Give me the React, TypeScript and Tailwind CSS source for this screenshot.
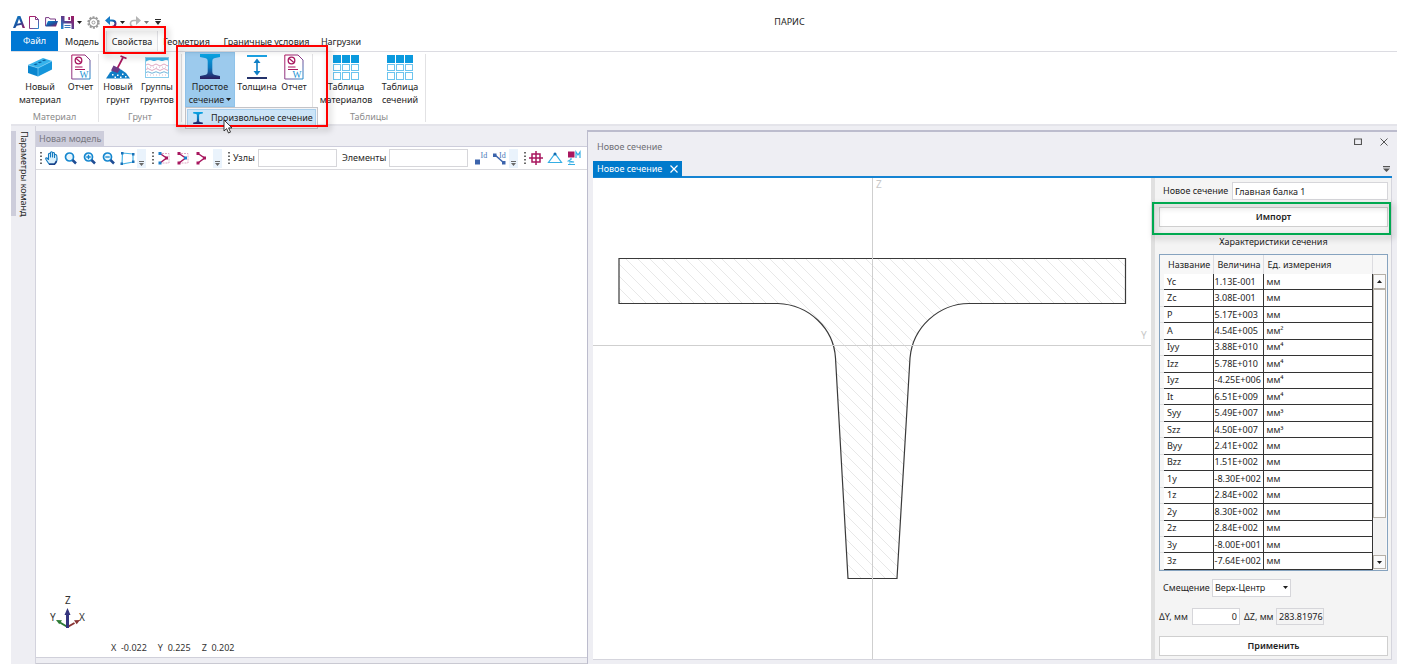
import React from "react";

const sectionRows: [string, string, string, string][] = [
  ["Yc", "1.13E-001", "мм", ""],
  ["Zc", "3.08E-001", "мм", ""],
  ["P", "5.17E+003", "мм", ""],
  ["A", "4.54E+005", "мм", "²"],
  ["Iyy", "3.88E+010", "мм", "⁴"],
  ["Izz", "5.78E+010", "мм", "⁴"],
  ["Iyz", "-4.25E+006", "мм", "⁴"],
  ["It", "6.51E+009", "мм", "⁴"],
  ["Syy", "5.49E+007", "мм", "³"],
  ["Szz", "4.50E+007", "мм", "³"],
  ["Вyy", "2.41E+002", "мм", ""],
  ["Bzz", "1.51E+002", "мм", ""],
  ["1y", "-8.30E+002", "мм", ""],
  ["1z", "2.84E+002", "мм", ""],
  ["2y", "8.30E+002", "мм", ""],
  ["2z", "2.84E+002", "мм", ""],
  ["3y", "-8.00E+001", "мм", ""],
  ["3z", "-7.64E+002", "мм", ""],
];

function Gradients() {
  return (
    <svg width="0" height="0" className="absolute" aria-hidden="true">
      <defs>
        <linearGradient id="beam" x1="0" y1="0" x2="0" y2="1">
          <stop offset="0" stopColor="#0aa5e4" />
          <stop offset="0.55" stopColor="#0b78bd" />
          <stop offset="1" stopColor="#2b1a5c" />
        </linearGradient>
        <linearGradient id="doc" x1="0" y1="0" x2="1" y2="1">
          <stop offset="0" stopColor="#b01561" />
          <stop offset="0.5" stopColor="#8a3b86" />
          <stop offset="1" stopColor="#1f8fd0" />
        </linearGradient>
        <linearGradient id="mix" x1="0" y1="0" x2="1" y2="1">
          <stop offset="0" stopColor="#0d8fd6" />
          <stop offset="0.55" stopColor="#1c4f9c" />
          <stop offset="1" stopColor="#a3165f" />
        </linearGradient>
        <linearGradient id="mixback" x1="1" y1="0" x2="0" y2="1">
          <stop offset="0" stopColor="#a3165f" />
          <stop offset="0.5" stopColor="#5b3d8c" />
          <stop offset="1" stopColor="#1593d8" />
        </linearGradient>
      </defs>
    </svg>
  );
}

function BeamIcon({ className }: { className: string }) {
  return (
    <svg viewBox="0 0 20 25" className={`shrink-0 ${className}`} aria-hidden="true">
      <path fill="url(#beam)" d="M0 0H20V3L14 4.200Q12.300 4.800 12.300 7V18Q12.300 20.200 14 20.800L20 22V25H0V22L6 20.800Q7.700 20.200 7.700 18V7Q7.700 4.800 6 4.200L0 3Z" />
    </svg>
  );
}

function BrickIcon() {
  return (
    <svg viewBox="0 0 26 20" className="h-5 w-[26px]" aria-hidden="true">
      <path fill="#35b3ec" d="M1 8 16 1 25 4 11 11Z" />
      <path fill="#0a86cf" d="M1 8 11 11V19.500L1 16Z" />
      <path fill="#1496dc" d="M11 11 25 4V12.500L11 19.500Z" />
      <path fill="#0b5f9e" d="m6.500 7.600 2.500-1.200 2 .7-2.500 1.200Zm4.200-2 2.500-1.200 2 .7-2.500 1.200Zm4.200-2 2.500-1.200 2 .7-2.500 1.200Z" />
      <path stroke="#7fd0f4" strokeWidth="0.7" fill="none" d="M1 8 11 11 25 4M11 11V19" />
    </svg>
  );
}

function ReportIcon() {
  return (
    <svg viewBox="0 0 20 26" className="h-[26px] w-5" fill="none" aria-hidden="true">
      <path stroke="url(#doc)" strokeWidth="1" d="M.8 1H14L19 6V25H.8Z" />
      <circle cx="7.500" cy="6.500" r="3.300" stroke="#a8175f" strokeWidth="1.300" />
      <path stroke="#a8175f" strokeWidth="1.200" d="m5.200 4.500 4.600 4M4 13h7.500M4 15.500H14" />
      <text x="8.500" y="24" fontSize="9.500" fill="#1c94d4" fontFamily="Liberation Serif, serif">W</text>
    </svg>
  );
}

function SoilIcon() {
  return (
    <svg viewBox="0 0 26 26" className="h-[26px] w-[26px]" fill="none" aria-hidden="true">
      <path fill="#0f7dc6" d="M1 24.500 5 18.500 10 15 16 15.500 21 19 25 24.500Z" />
      <path stroke="#a8175f" strokeWidth="1.700" d="M12 15 18 3.500" />
      <path stroke="#a8175f" strokeWidth="1.800" d="m15.500 2 6 2.500" />
      <path fill="#6a3b86" d="m8.500 11.500 7 3.500-3 4-6.500-2.500Z" />
      <path fill="#fff" d="M7 20h1.500v1.500H7ZM12 20.500h1.500V22H12ZM17 19.500h1.500V21H17ZM9.500 22.500H11V24H9.500ZM15 22.500h1.500V24H15ZM20 22h1.500v1.500H20Z" />
    </svg>
  );
}

function SoilGroupsIcon() {
  return (
    <svg viewBox="0 0 24 21" className="h-[21px] w-6" fill="none" aria-hidden="true">
      <rect x=".5" y=".5" width="23" height="20" stroke="#8accec" />
      <path fill="#42b4e6" d="M1 1H23V3.500Q21 2.500 19 3.500T15 3.500 11 3.500 7 3.500 3 3.500L1 4.500Z" />
      <path stroke="#d78fb0" strokeWidth=".8" d="M1 8q2-2 4 0t4 0 4 0 4 0 4 0 2 0M1 12.500q2-2 4 0t4 0 4 0 4 0 4 0 2 0" />
      <path stroke="#4c9fd0" strokeWidth=".8" d="M1 15.500q2-1.500 4 0t4 0 4 0 4 0 4 0 2 0" />
      <path stroke="#c9a6c9" strokeWidth=".8" strokeDasharray="1 2" d="M2 10.200H22M2 18H22" />
    </svg>
  );
}

function ThicknessIcon() {
  return (
    <svg viewBox="0 0 20 24" className="h-6 w-5" fill="none" aria-hidden="true">
      <path stroke="#1ba1e2" strokeWidth="2" d="M0 1H20" />
      <path stroke="#24336b" strokeWidth="2" d="M0 23H20" />
      <path stroke="#0e7fc6" strokeWidth="1.600" d="M10 5V19" />
      <path fill="#0e7fc6" d="m10 3.500 3.500 4.500h-7ZM10 20.500 13.500 16h-7Z" />
    </svg>
  );
}

function TableIcon() {
  return (
    <svg viewBox="0 0 26 25" className="h-[25px] w-[26px]" fill="#fff" stroke="#6cc4ee" aria-hidden="true">
      {[0, 9, 18].map((x) => (
        <g key={x}>
          <rect x={x + 0.5} y="0.500" width="7" height="7" fill="#0b9ade" stroke="#0b9ade" />
          <rect x={x + 0.5} y="9.500" width="7" height="6" />
          <rect x={x + 0.5} y="17.500" width="7" height="7" />
        </g>
      ))}
    </svg>
  );
}

function Caret({ className = "" }: { className?: string }) {
  return (
    <svg viewBox="0 0 5 3" className={`h-[3px] w-[5px] ${className}`} aria-hidden="true">
      <path fill="#1e1e1e" d="M0 0H5L2.500 3Z" />
    </svg>
  );
}

function QuickAccess() {
  return (
    <div className="flex h-[18px] w-[171px] items-center pl-[2px]">
      <svg viewBox="0 0 13 13" className="h-3 w-3" aria-hidden="true">
        <path fill="url(#mix)" fillRule="evenodd" d="M5 0H8L13 13H10.400L9.200 9.500 4 10.500 2.500 13H0ZM6.500 3 4.700 8.300 8.500 7.500Z" />
      </svg>
      <button aria-label="Новый" className="ml-[4px]">
        <svg viewBox="0 0 10 13" className="h-[13px] w-[10px]" fill="none" stroke="url(#doc)" aria-hidden="true"><path d="M.5.500H6.500L9.500 3.500V12.500H.5ZM6.500.500V3.500H9.500" /></svg>
      </button>
      <button aria-label="Открыть" className="ml-[6px]">
        <svg viewBox="0 0 13 10" className="h-[10px] w-[13px]" fill="none" aria-hidden="true"><path stroke="#7a3a86" d="M.6 9V.6H4L5 2H10.500V4" /><path fill="url(#mix)" d="M3 4H13L11 9.500H.5Z" /></svg>
      </button>
      <button aria-label="Сохранить" className="ml-[3px]">
        <svg viewBox="0 0 13 13" className="h-[13px] w-[13px]" aria-hidden="true"><path fill="url(#mixback)" d="M0 0H13V13H0Z" /><path fill="#fff" d="M3.500 0H10V5H3.500ZM2.500 7.500H10.500V13H2.500Z" /><path fill="#95266e" d="M7.300 1H9V4H7.300Z" /><path fill="#3a78b9" d="M3.500 9H9.500V10H3.500ZM3.500 11H9.500V12H3.500Z" /></svg>
      </button>
      <Caret className="ml-[3px]" />
      <button aria-label="Настройки" className="ml-[5px]">
        <svg viewBox="0 0 13 13" className="h-[13px] w-[13px]" fill="none" stroke="#9a9a9a" aria-hidden="true"><circle cx="6.500" cy="6.500" r="5.300" strokeWidth="1.800" strokeDasharray="2.100 1.230" /><circle cx="6.500" cy="6.500" r="4.300" strokeWidth="1.200" /><circle cx="6.500" cy="6.500" r="1.500" /></svg>
      </button>
      <button aria-label="Отменить" className="ml-[5px]">
        <svg viewBox="0 0 12 12" className="h-3 w-3" fill="none" aria-hidden="true"><path fill="#1778c4" d="M0 4.500 5 0V9Z" /><path stroke="url(#mix)" strokeWidth="2" d="M3 4.500H7Q10.500 4.500 10.500 7.500T7 11H5" /></svg>
      </button>
      <Caret className="ml-[3px]" />
      <button aria-label="Повторить" className="ml-[4px]">
        <svg viewBox="0 0 12 12" className="h-3 w-3" fill="none" aria-hidden="true"><path fill="#b4b4b4" d="M12 4.500 7 0V9Z" /><path stroke="#b4b4b4" strokeWidth="1.600" d="M9 4.500H5Q1.500 4.500 1.500 7.500T5 11H6" /></svg>
      </button>
      <Caret className="ml-[3px] opacity-60" />
      <svg viewBox="0 0 6 6" className="ml-[6px] h-[6px] w-[6px]" fill="#2a2a2a" aria-hidden="true"><path d="M0 0H6V1H0ZM0 2H6L3 6Z" /></svg>
    </div>
  );
}

function Highlight({ className }: { className: string }) {
  return <div aria-hidden="true" className={`pointer-events-none absolute z-20 border-2 drop-shadow-[2px_3px_3px_rgba(0,0,0,0.3)] ${className}`} />;
}

function RibbonButton({ icon, lines, className }: { icon: React.ReactNode; lines: string[]; className: string }) {
  return (
    <button className={`flex h-[55px] flex-col items-center ${className}`}>
      <span className="flex h-7 items-center justify-center pt-[2px]">{icon}</span>
      {lines.map((line) => (
        <span key={line} className="h-[13px] whitespace-nowrap leading-[13px]">{line}</span>
      ))}
    </button>
  );
}

function RibbonGroup({ label, className, children }: { label: string; className: string; children: React.ReactNode }) {
  return (
    <div className={`relative flex flex-col ${className}`}>
      <div className="flex">{children}</div>
      <div className="pt-[3px] text-center leading-[14px] text-[#8c8c8c]">{label}</div>
    </div>
  );
}

function Divider() {
  return <div className="my-[2px] w-px bg-[#e2e2e4]" />;
}

function Ribbon() {
  return (
    <div className="flex h-[73px] border-t border-[#dcdce2]">
      <RibbonGroup label="Материал" className="w-[87px]">
        <RibbonButton className="ml-[3px] w-[52px]" icon={<BrickIcon />} lines={["Новый", "материал"]} />
        <RibbonButton className="w-[29px]" icon={<ReportIcon />} lines={["Отчет"]} />
      </RibbonGroup>
      <Divider />
      <RibbonGroup label="Грунт" className="w-[82px]">
        <RibbonButton className="w-[38px]" icon={<SoilIcon />} lines={["Новый", "грунт"]} />
        <RibbonButton className="w-[40px]" icon={<SoilGroupsIcon />} lines={["Группы", "грунтов"]} />
      </RibbonGroup>
      <Divider />
      <RibbonGroup label="" className="w-[130px] pl-[3px]">
        <button className="flex h-[55px] w-[50px] flex-col items-center border border-[#8fc3ea] bg-[#9ccaed]">
          <span className="flex h-[27px] items-center"><BeamIcon className="h-[25px] w-5" /></span>
          <span className="h-[13px] leading-[13px]">Простое</span>
          <span className="flex h-[13px] items-center gap-[2px] leading-[13px]">сечение <Caret /></span>
        </button>
        <RibbonButton className="w-[44px]" icon={<ThicknessIcon />} lines={["Толщина"]} />
        <RibbonButton className="w-[30px]" icon={<ReportIcon />} lines={["Отчет"]} />
        <div role="menu" className="absolute top-[55px] left-[3px] z-10 w-[133px] border border-[#c4c4c8] bg-[#f5f5f7] p-px">
          <button role="menuitem" className="flex h-[18px] w-full items-center gap-2 border border-[#a9cfec] bg-[#cbe4f7] pl-[5px] whitespace-nowrap">
            <BeamIcon className="h-[12px] w-[10px]" />
            Произвольное сечение
          </button>
        </div>
        <Highlight className="-top-[7px] -left-[6px] h-[82px] w-[152px] border-[#ff0000]" />
        <svg viewBox="0 0 10 15" className="absolute top-[67px] left-[41px] z-30 h-[15px] w-[10px]" aria-hidden="true">
          <path fill="#fff" stroke="#222" strokeWidth=".9" d="M1 1V12L3.600 9.600 5.500 14 7.500 13.100 5.600 8.900H9Z" />
        </svg>
      </RibbonGroup>
      <Divider />
      <RibbonGroup label="Таблицы" className="w-[112px]">
        <RibbonButton className="w-[66px]" icon={<TableIcon />} lines={["Таблица", "материалов"]} />
        <RibbonButton className="w-[42px]" icon={<TableIcon />} lines={["Таблица", "сечений"]} />
      </RibbonGroup>
      <Divider />
    </div>
  );
}

function Grip() {
  return (
    <svg viewBox="0 0 2 12" className="h-3 w-[2px] shrink-0" fill="#6a6a6a" aria-hidden="true">
      <path d="M0 0H2V1.500H0ZM0 3.500H2V5H0ZM0 7H2V8.500H0ZM0 10.500H2V12H0Z" />
    </svg>
  );
}

function Overflow() {
  return (
    <button aria-label="Ещё" className="flex h-[19px] w-[9px] shrink-0 items-end justify-center bg-[#eaf3fc] pb-[2px]">
      <svg viewBox="0 0 5 5" className="h-[5px] w-[5px]" fill="#6a6a6a" aria-hidden="true"><path d="M0 0H5V1H0ZM0 2H5L2.500 5Z" /></svg>
    </button>
  );
}

function Tool({ label, children }: { label: string; children: React.ReactNode }) {
  return (
    <button aria-label={label} className="flex h-[19px] w-[19px] shrink-0 items-center justify-center">
      <svg viewBox="0 0 16 16" className="h-4 w-4" fill="none" aria-hidden="true">{children}</svg>
    </button>
  );
}

function Lens({ sign }: { sign: string }) {
  return (
    <>
      <circle cx="6.500" cy="7" r="4" fill="#e6f5fd" stroke="#1587cf" strokeWidth="1.700" />
      <path stroke="#1d4c94" strokeWidth="2.500" d="m9.500 10 3.500 3.500" />
      <path stroke="#1587cf" strokeWidth="1.300" d={sign} />
    </>
  );
}

function Nodes({ a, b }: { a: string; b: string }) {
  return (
    <>
      <path stroke="#a8175f" strokeWidth="1.500" d="M4 3.500 10.500 8 4 13" />
      <rect x="2.500" y="2" width="3" height="3" fill={a} />
      <rect x="9" y="6.500" width="3" height="3" fill={b} />
      <rect x="2.500" y="11.500" width="3" height="3" fill={a} />
    </>
  );
}

function ModelToolbar() {
  return (
    <div className="flex h-[23px] items-center overflow-hidden border-b border-[#dadade] bg-white pl-[4px]">
      <Grip />
      <div className="flex">
        <Tool label="Панорама">
          <path fill="#d8effb" stroke="#1379bf" strokeWidth="1.100" strokeLinejoin="round" d="M5 14 2 9.500Q1 7.500 3 8L4.500 9.500V4Q5.500 2.500 6.500 4V7 2.500Q7.500 1 8.500 2.500V7 3Q9.700 1.800 10.500 3.200V7.500 5Q12 3.800 12.700 5.500 14 12 10.500 14Z" />
          <path stroke="#1b3f86" strokeWidth="1.500" d="M5 14.300H10.500L12.500 11" />
        </Tool>
        <Tool label="Показать всё"><Lens sign="" /></Tool>
        <Tool label="Увеличить"><Lens sign="M6.500 4.800V9.200M4.300 7H8.700" /></Tool>
        <Tool label="Уменьшить"><Lens sign="M4.300 7H8.700" /></Tool>
        <Tool label="Рамка">
          <path stroke="#4ab4e6" strokeWidth="1.200" d="M2.500 3 13 4V12L2 14Z" />
          <path fill="#1971b8" d="M1 2H3.500V4.500H1ZM12 3H14.500V5.500H12ZM12 10.500H14.500V13H12ZM.5 12.500H3V15H.5Z" />
        </Tool>
      </div>
      <Overflow />
      <div className="ml-[6px] flex items-center">
        <Grip />
        <div className="flex">
          <Tool label="Узлы элементов"><path stroke="#e0a5c2" strokeDasharray="2 1" d="M6 3.500H13V13H6" /><Nodes a="#1a7fcb" b="#a8175f" /></Tool>
          <Tool label="Концы элементов"><path stroke="#e0a5c2" strokeDasharray="2 1" d="M6 3.500H13V13H6" /><Nodes a="#a8175f" b="#1a7fcb" /></Tool>
          <Tool label="Элементы по узлам"><Nodes a="#a8175f" b="#a8175f" /></Tool>
        </div>
      </div>
      <div className="ml-[2px] flex"><Overflow /></div>
      <div className="ml-[6px] flex items-center">
        <Grip />
        <label htmlFor="nodes" className="ml-[3px] w-[25px]">Узлы</label>
        <input id="nodes" className="h-[18px] w-[79px] border border-[#d6d6da] bg-white px-1" />
        <label htmlFor="elements" className="ml-[5px] w-[47px]">Элементы</label>
        <input id="elements" className="h-[18px] w-[79px] border border-[#d6d6da] bg-white px-1" />
      </div>
      <div className="ml-[3px] flex">
        <Tool label="Номера узлов">
          <path fill="#3c64ac" d="M2 9.500H7V14.500H2Z" />
          <text x="7.500" y="7.500" fontSize="8" fill="#4c78b8" fontFamily="Liberation Serif, serif">Id</text>
        </Tool>
        <Tool label="Номера элементов">
          <path stroke="#3c64ac" strokeWidth="1.500" d="m3 5 9 8" />
          <path fill="#3c64ac" d="M1 3.500H4.500V7H1ZM10 11H13.500V14.500H10Z" />
          <text x="7" y="7.500" fontSize="8" fill="#4c78b8" fontFamily="Liberation Serif, serif">Id</text>
        </Tool>
      </div>
      <Overflow />
      <div className="ml-[6px] flex items-center">
        <Grip />
        <div className="flex">
          <Tool label="Узел"><path stroke="#a8175f" strokeWidth="1.500" d="M4 4H12V12H4ZM8 1V15M1 8H15" /></Tool>
          <Tool label="Опора"><path stroke="#35aee4" strokeWidth="1.200" d="M8 3.500 1.500 12.500H14.500Z" /><circle cx="8" cy="4" r="1.500" fill="#126bb0" /></Tool>
          <Tool label="Связи"><path fill="#a8175f" d="M2 1.500H8.500V7.500H2Z" /><path stroke="#35aee4" strokeWidth="1.200" d="M5 8v1.500L2.500 11 8 12 3 13M2 14.500H9M10 8V2L12 5 14 2V8" /></Tool>
        </div>
      </div>
    </div>
  );
}

function ModelPanel() {
  return (
    <div className="flex w-[552px] shrink-0 flex-col border-l border-[#d3d3dd]">
      <div className="flex h-[21px] items-end border-b border-[#cdcddb]">
        <div className="h-[15px] bg-[#cdcddb] px-[3px] leading-[16px] text-[#77777f]">Новая модель</div>
      </div>
      <ModelToolbar />
      <div className="flex flex-1 flex-col justify-end border-b border-[#d0d0da] bg-white">
        <svg viewBox="0 0 40 38" className="ml-3 h-[38px] w-10" fontSize="10" fill="#333" aria-hidden="true">
          <text x="17" y="10">Z</text>
          <text x="2" y="27">Y</text>
          <text x="31" y="27">X</text>
          <path stroke="#2c7a34" strokeWidth="2" d="M19.500 33 12 28.500" /><path fill="#2c7a34" d="m8 26 6 .3-2.700 4Z" />
          <path stroke="#883434" strokeWidth="2" d="m19.500 33 7-4" /><path fill="#883434" d="m32 26-6 .3 2.700 4Z" />
          <path stroke="#34347e" strokeWidth="3" d="M19.500 34V19" /><path fill="#34347e" d="m19.500 14 3 7h-6Z" />
        </svg>
        <div className="flex gap-[11px] pt-[8px] pb-px pl-[75px] leading-[16px] text-[#333]">
          <span>X&nbsp; -0.022</span>
          <span>Y&nbsp; 0.225</span>
          <span>Z&nbsp; 0.202</span>
        </div>
      </div>
      <div className="h-[6px] border-b border-[#c9c9d2]" />
    </div>
  );
}

function SectionDrawing() {
  return (
    <svg viewBox="0 0 558 481" preserveAspectRatio="xMidYMin meet" className="min-w-0 flex-1 bg-white" fill="none" role="img" aria-label="Сечение главной балки">
      <defs>
        <pattern id="hatch" width="12" height="12" patternUnits="userSpaceOnUse">
          <path stroke="#e8e8e8" strokeWidth="1" d="M-1-1 13 13M11-1 13 1M-1 11 1 13" />
        </pattern>
      </defs>
      <path fill="url(#hatch)" stroke="#3a3a3a" strokeWidth="1.200" d="M26 80.500H532.500V125.500H376A60 60 0 0 0 317 180L304 400.500H255L242.500 180A60 58 0 0 0 185 125.500H26Z" />
      <path stroke="#cfcfcf" d="M279.500 0V481M0 167.500H558" />
      <text x="283" y="10" fontSize="10" fill="#c8c8c8">Z</text>
      <text x="548" y="161" fontSize="10" fill="#c8c8c8">Y</text>
    </svg>
  );
}

function ScrollBar() {
  return (
    <div className="flex w-[14px] flex-col pt-[19px] pr-px">
      <button aria-label="Вверх" className="flex h-[15px] items-center justify-center border border-[#b5b0a8] bg-[#fafafa]">
        <Caret className="rotate-180" />
      </button>
      <div className="flex-1 bg-[#f2f2f2]">
        <div className="h-[86%] border border-[#b5b0a8] bg-[#fcfcfc]" />
      </div>
      <button aria-label="Вниз" className="mb-px flex h-[14px] items-center justify-center border border-[#b5b0a8] bg-[#fafafa]">
        <Caret />
      </button>
    </div>
  );
}

function PropertiesPanel() {
  return (
    <div className="flex w-[241px] shrink-0 flex-col border-r border-l-4 border-r-[#d5d5dd] border-l-[#e0e0e0] bg-[#f4f4f4] pt-[4px] pr-[3px] pb-[3px] pl-[4px]">
      <div className="flex items-center pl-1">
        <label htmlFor="section" className="w-[69px] whitespace-nowrap">Новое сечение</label>
        <input id="section" defaultValue="Главная балка 1" className="h-[18px] min-w-0 flex-1 border border-[#d6d6da] bg-white px-[2px]" />
      </div>
      <div className="relative mt-[7px]">
        <button className="h-5 w-full border border-[#cfcfcf] bg-white font-semibold">Импорт</button>
        <Highlight className="-top-[5px] -right-[3px] -bottom-[8px] -left-[7px] border-[#00a950]" />
      </div>
      <div className="mt-[7px] h-[15px] text-center leading-[15px]">Характеристики сечения</div>
      <div className="mt-[5px] flex min-h-0 flex-1 border border-[#86a3bf] bg-[#f7f7f7]">
        <table className="h-full w-0 flex-1 table-fixed border-collapse text-left">
          <colgroup>
            <col className="w-[4px]" />
            <col className="w-[49px]" />
            <col className="w-[50px]" />
            <col />
          </colgroup>
          <thead>
            <tr className="h-[19px]">
              <th className="p-0" />
              <th className="border-r border-[#dcdce0] p-0 pl-1 font-normal">Название</th>
              <th className="border-r border-[#dcdce0] p-0 pl-1 font-normal">Величина</th>
              <th className="border-r border-[#dcdce0] p-0 pl-1 font-normal">Ед. измерения</th>
            </tr>
          </thead>
          <tbody>
            {sectionRows.map(([name, value, unit, power]) => (
              <tr key={name}>
                <td className="border-b border-[#e2e2e2] p-0" />
                <td className="border-r border-b border-[#333] bg-white p-0 pl-[3px] leading-[14px]">{name}</td>
                <td className="border-r border-b border-[#333] bg-white p-0 pl-px leading-[14px] whitespace-nowrap">{value}</td>
                <td className="border-r border-b border-[#333] bg-white p-0 pl-[3px] leading-[14px]">{unit}{power}</td>
              </tr>
            ))}
          </tbody>
        </table>
        <ScrollBar />
      </div>
      <div className="mt-[8px] flex items-center pl-1">
        <label htmlFor="offset" className="w-[49px]">Смещение</label>
        <div className="relative flex">
          <select id="offset" className="h-[18px] w-[79px] appearance-none border border-[#d6d6da] bg-white pl-[2px]">
            <option>Верх-Центр</option>
          </select>
          <Caret className="pointer-events-none absolute top-[7px] right-[3px]" />
        </div>
      </div>
      <div className="mt-[11px] flex items-center">
        <label htmlFor="dy" className="w-[33px] whitespace-nowrap">ΔY, мм</label>
        <input id="dy" defaultValue="0" className="h-[17px] w-[48px] border border-[#d6d6da] bg-white px-[2px] text-right" />
        <label htmlFor="dz" className="ml-[4px] w-[32px] whitespace-nowrap">ΔZ, мм</label>
        <input id="dz" defaultValue="283.81976" className="h-[17px] w-[48px] border border-[#d6d6da] bg-[#f4f4f4] pl-[2px]" />
      </div>
      <button className="mt-[11px] h-5 w-full border border-[#cfcfcf] bg-white font-semibold">Применить</button>
    </div>
  );
}

function SectionWindow() {
  return (
    <div className="mt-[4px] flex min-w-0 flex-1 flex-col border-t-2 border-l border-[#bcbccd] pr-[5px] pb-[4px] pl-[5px]">
      <div className="flex h-[29px] items-center justify-between pr-[4px] pl-1 text-[#6f6f75]">
        <span>Новое сечение</span>
        <div className="flex items-center gap-[18px] pb-[9px]">
          <button aria-label="Развернуть">
            <svg viewBox="0 0 8 8" className="h-2 w-2" fill="none" stroke="#555" aria-hidden="true"><path d="M.5 1V6.500H7.500V1M0 1H8" strokeWidth="1.200" /></svg>
          </button>
          <button aria-label="Закрыть">
            <svg viewBox="0 0 8 8" className="h-2 w-2" fill="none" stroke="#555" aria-hidden="true"><path d="m.5.500 7 7M7.500.500l-7 7" /></svg>
          </button>
        </div>
      </div>
      <div className="flex h-[17px] items-center justify-between border-b-2 border-[#1583d2] pr-[2px]">
        <div className="flex h-4 items-center gap-[8px] bg-[#007acc] pr-[4px] pl-[4px] text-white">
          <span>Новое сечение</span>
          <button aria-label="Закрыть вкладку">
            <svg viewBox="0 0 8 8" className="h-2 w-2" fill="none" stroke="#fff" strokeWidth="1.200" aria-hidden="true"><path d="m.5.500 7 7M7.500.500l-7 7" /></svg>
          </button>
        </div>
        <svg viewBox="0 0 7 6" className="h-[6px] w-[7px]" fill="#555" aria-hidden="true"><path d="M0 0H7V1.200H0ZM0 2.500H7L3.500 6Z" /></svg>
      </div>
      <div className="flex min-h-0 flex-1 border-b border-[#d5d5dd]">
        <SectionDrawing />
        <PropertiesPanel />
      </div>
    </div>
  );
}

export default function App() {
  return (
    <div className="flex min-h-screen flex-col bg-white pt-[13px] pr-[17px] pb-[7px] pl-[11px] font-['Noto_Sans',sans-serif] text-[9px] leading-[14px] text-[#1e1e1e]">
      <Gradients />
      <header className="flex items-center">
        <QuickAccess />
        <h1 className="flex-1 text-center">ПАРИС</h1>
      </header>
      <nav className="flex h-5 items-stretch">
        <button className="w-[47px] bg-[#0078d4] text-white">Файл</button>
        <button className="ml-[6px] w-[36px] pt-[2px] whitespace-nowrap">Модель</button>
        <div className="relative ml-[6px] flex">
          <button className="w-[52px] border-x border-[#e0e0e4] bg-[#fafafa] pt-[2px]">Свойства</button>
          <Highlight className="-top-[5px] -left-[3px] h-[28px] w-[63px] border-[#ff0000]" />
        </div>
        <button className="ml-[4px] w-[49px] pt-[2px] whitespace-nowrap">Геометрия</button>
        <button className="ml-[9px] w-[93px] pt-[2px] whitespace-nowrap">Граничные условия</button>
        <button className="ml-[6px] w-[44px] pt-[2px] whitespace-nowrap">Нагрузки</button>
      </nav>
      <Ribbon />
      <main className="flex flex-1 border-t-2 border-[#e4e4ea] bg-[#eeeef3]">
        <aside className="flex w-6 shrink-0 items-start pt-[5px]">
          <div className="flex border-l-5 border-[#cdcddb] pl-[1px]">
            <button className="h-[85px] whitespace-nowrap [writing-mode:vertical-rl]">Параметры команд</button>
          </div>
        </aside>
        <ModelPanel />
        <SectionWindow />
      </main>
    </div>
  );
}
